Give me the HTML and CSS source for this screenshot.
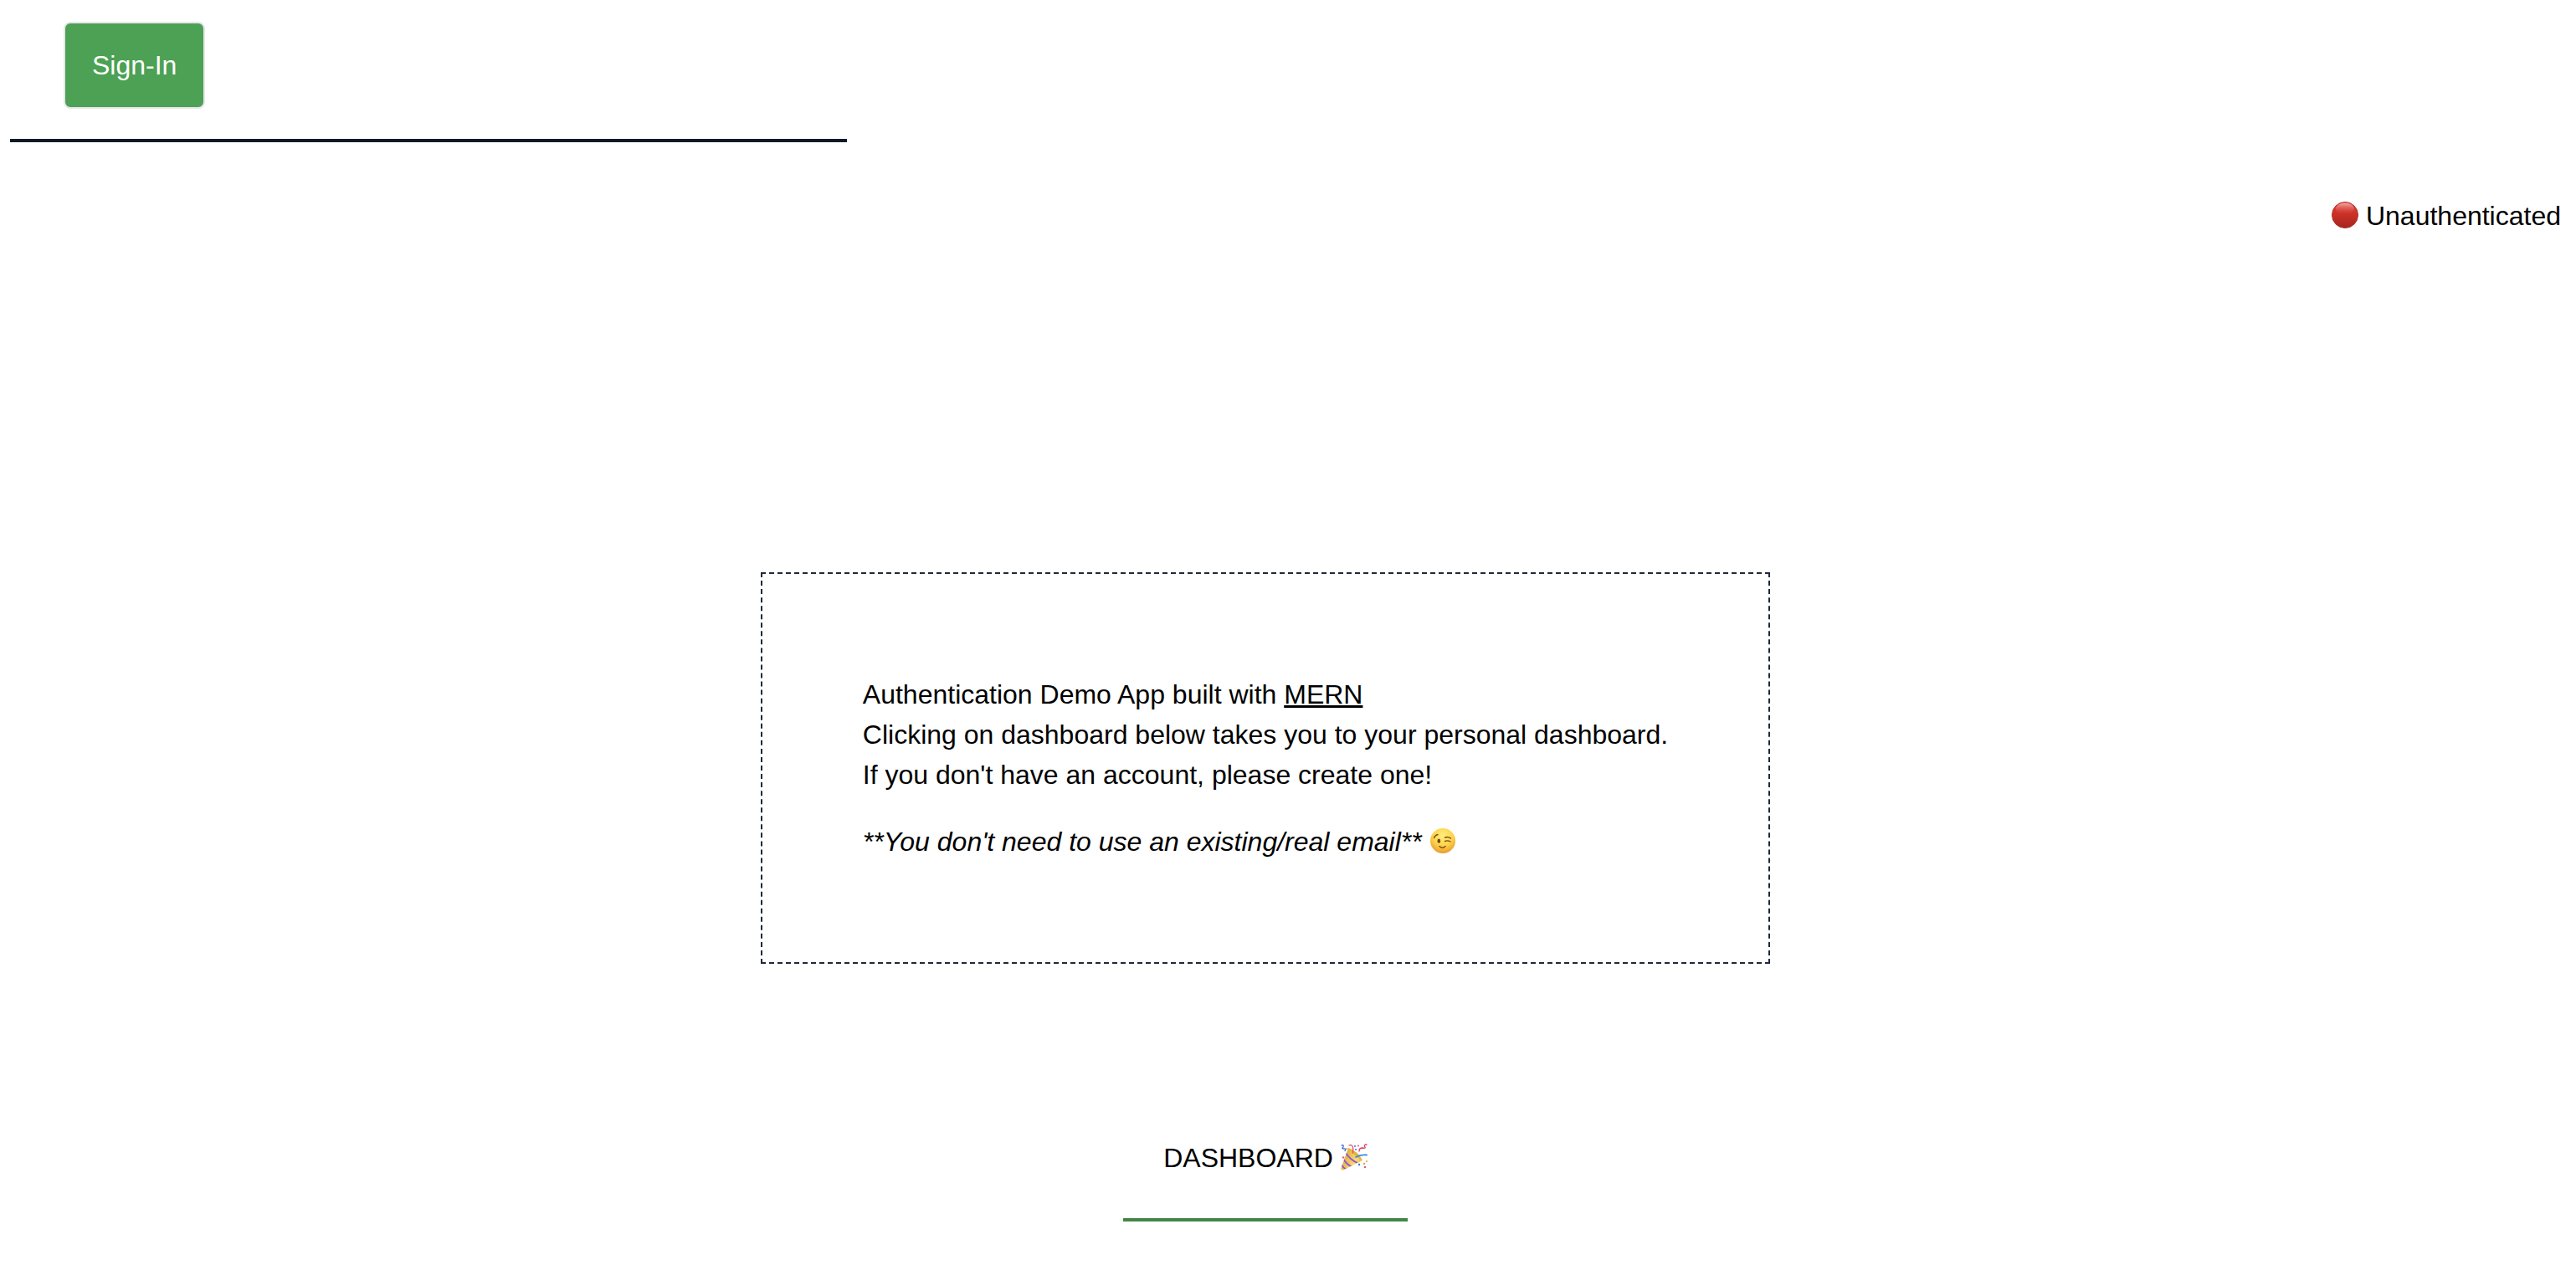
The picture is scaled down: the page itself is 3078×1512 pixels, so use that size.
FILE: index.html
```html
<!DOCTYPE html>
<html lang="en">
<head>
<meta charset="utf-8">
<title>Authentication Demo</title>
<link rel="stylesheet" href="styles.css">
</head>
<body>
<header>
  <nav class="nav">
    <button class="sign-in" type="button">Sign-In</button>
  </nav>
  <p class="status">
    <svg class="emoji" viewBox="0 0 32 32" role="img" aria-label="Red circle">
      <defs>
        <linearGradient id="red" x1="0" y1="0" x2="0" y2="1">
          <stop offset="0" stop-color="#d9453c"/>
          <stop offset=".45" stop-color="#cd3026"/>
          <stop offset="1" stop-color="#a4261f"/>
        </linearGradient>
        <linearGradient id="shine" x1="0" y1="0" x2="0" y2="1">
          <stop offset="0" stop-color="#f3a8a2"/>
          <stop offset="1" stop-color="#d9453c" stop-opacity="0"/>
        </linearGradient>
      </defs>
      <circle cx="16" cy="16" r="15.5" fill="url(#red)" stroke="#b3322a"/>
      <ellipse cx="16" cy="8.5" rx="11" ry="7" fill="url(#shine)"/>
    </svg>
    Unauthenticated
  </p>
</header>
<main class="home">
  <section class="card">
    <p>Authentication Demo App built with <a class="link" href="#mern">MERN</a><br>
      Clicking on dashboard below takes you to your personal dashboard.<br>
      If you don't have an account, please create one!</p>
    <p><em>**You don't need to use an existing/real email**</em>
      <svg class="emoji" viewBox="0 0 32 32" role="img" aria-label="Winking face">
        <defs>
          <radialGradient id="face" cx=".5" cy=".3" r=".72">
            <stop offset="0" stop-color="#ffee80"/>
            <stop offset=".55" stop-color="#fcd44b"/>
            <stop offset="1" stop-color="#e9962c"/>
          </radialGradient>
        </defs>
        <circle cx="16" cy="16" r="15" fill="url(#face)"/>
        <ellipse cx="11.3" cy="16.2" rx="1.8" ry="2.6" fill="#6b4313"/>
        <g fill="none" stroke="#7a4b14" stroke-width="1.4" stroke-linecap="round">
          <path d="M5.5 12.5Q7 9 10 8.500"/>
          <path d="M18.500 12Q22 10.500 25.500 13"/>
          <path d="M18.500 16.500Q22 15 25 17"/>
          <path d="M12 22.500Q15.500 26 19 22.500"/>
        </g>
      </svg></p>
  </section>
  <a class="dashboard" href="#dashboard">DASHBOARD
    <svg class="emoji" viewBox="0 0 32 32" role="img" aria-label="Party popper">
      <defs>
        <linearGradient id="cone" x1="0" y1="0.500" x2="1" y2="1">
          <stop offset="0" stop-color="#d9a832"/>
          <stop offset=".5" stop-color="#f6dc72"/>
          <stop offset="1" stop-color="#c98d24"/>
        </linearGradient>
        <clipPath id="cone-shape"><path d="M9 5Q20 10 26 20L3 31.500Q0 32 .5 29Z"/></clipPath>
      </defs>
      <g clip-path="url(#cone-shape)">
        <path d="M0 0H32V32H0Z" fill="url(#cone)"/>
        <path d="M6 11Q11 19 20 23M3 18Q7 25 14 28M0 24Q3 29 7 31" fill="none" stroke="#9a4fd6" stroke-width="1.800"/>
      </g>
      <path d="M9 5Q21 9 26 20Q22 18.500 17 14Q12 9 9 5Z" fill="#e3b545"/>
      <g fill="none" stroke-width="1.300" stroke-linecap="round">
        <path d="M1 2Q4 1 3 4Q0 6 4 6Q7 6 5 8.500" stroke="#3f6fdc"/>
        <path d="M10 2Q16 0 14.500 11" stroke="#e2476b"/>
        <path d="M31 1Q27 1 29 4Q30 6 26 5Q22 5 22 9" stroke="#d8405f"/>
        <path d="M18 16Q24 12.500 31 13.500" stroke="#4787e8" stroke-width="1.800"/>
      </g>
      <g fill="#df587c"><circle cx="3" cy="16.500" r="1.200"/><circle cx="21" cy="2.500" r="1"/><circle cx="29" cy="28" r="1.200"/></g>
      <g fill="#e9a23e"><circle cx="7" cy="6" r="1"/><circle cx="28" cy="24" r="1.200"/><circle cx="31" cy="21" r="1"/></g>
      <g fill="#4274d8"><circle cx="17" cy="3" r="1"/><circle cx="18" cy="7" r="1"/><circle cx="22" cy="25" r="1.200"/></g>
    </svg></a>
</main>
</body>
</html>
```
FILE: styles.css
```css
* { box-sizing: border-box; }

body {
  margin: 0;
  background: #fff;
  color: #000;
  font: 32px/48px "Liberation Sans", Arial, sans-serif;
}

p { margin: 0; }

a { color: inherit; text-decoration: none; }

.nav {
  max-width: 1000px;
  margin: 0 12px;
  padding: 26px 64px 36px;
  border-bottom: 4px solid #111827;
}

.sign-in {
  display: block;
  padding: 32px;
  border: 2px solid #e5e7eb;
  border-radius: 8px;
  background: #4ca154;
  color: #fff;
  font: inherit;
  line-height: 36px;
}

.status {
  padding: 64px 18px 0;
  text-align: right;
}

.emoji {
  width: 32px;
  height: 32px;
  vertical-align: -4px;
}

.home {
  display: flex;
  flex-direction: column;
  align-items: center;
  gap: 160px;
  padding: 402px 54px 52px 0;
}

.card {
  display: grid;
  gap: 32px;
  padding: 120px;
  border: 2px dashed #1e293b;
}

.link {
  text-decoration: underline;
  text-decoration-thickness: 3px;
}

.dashboard {
  padding: 48px;
  border-bottom: 4px solid #428546;
}
```
